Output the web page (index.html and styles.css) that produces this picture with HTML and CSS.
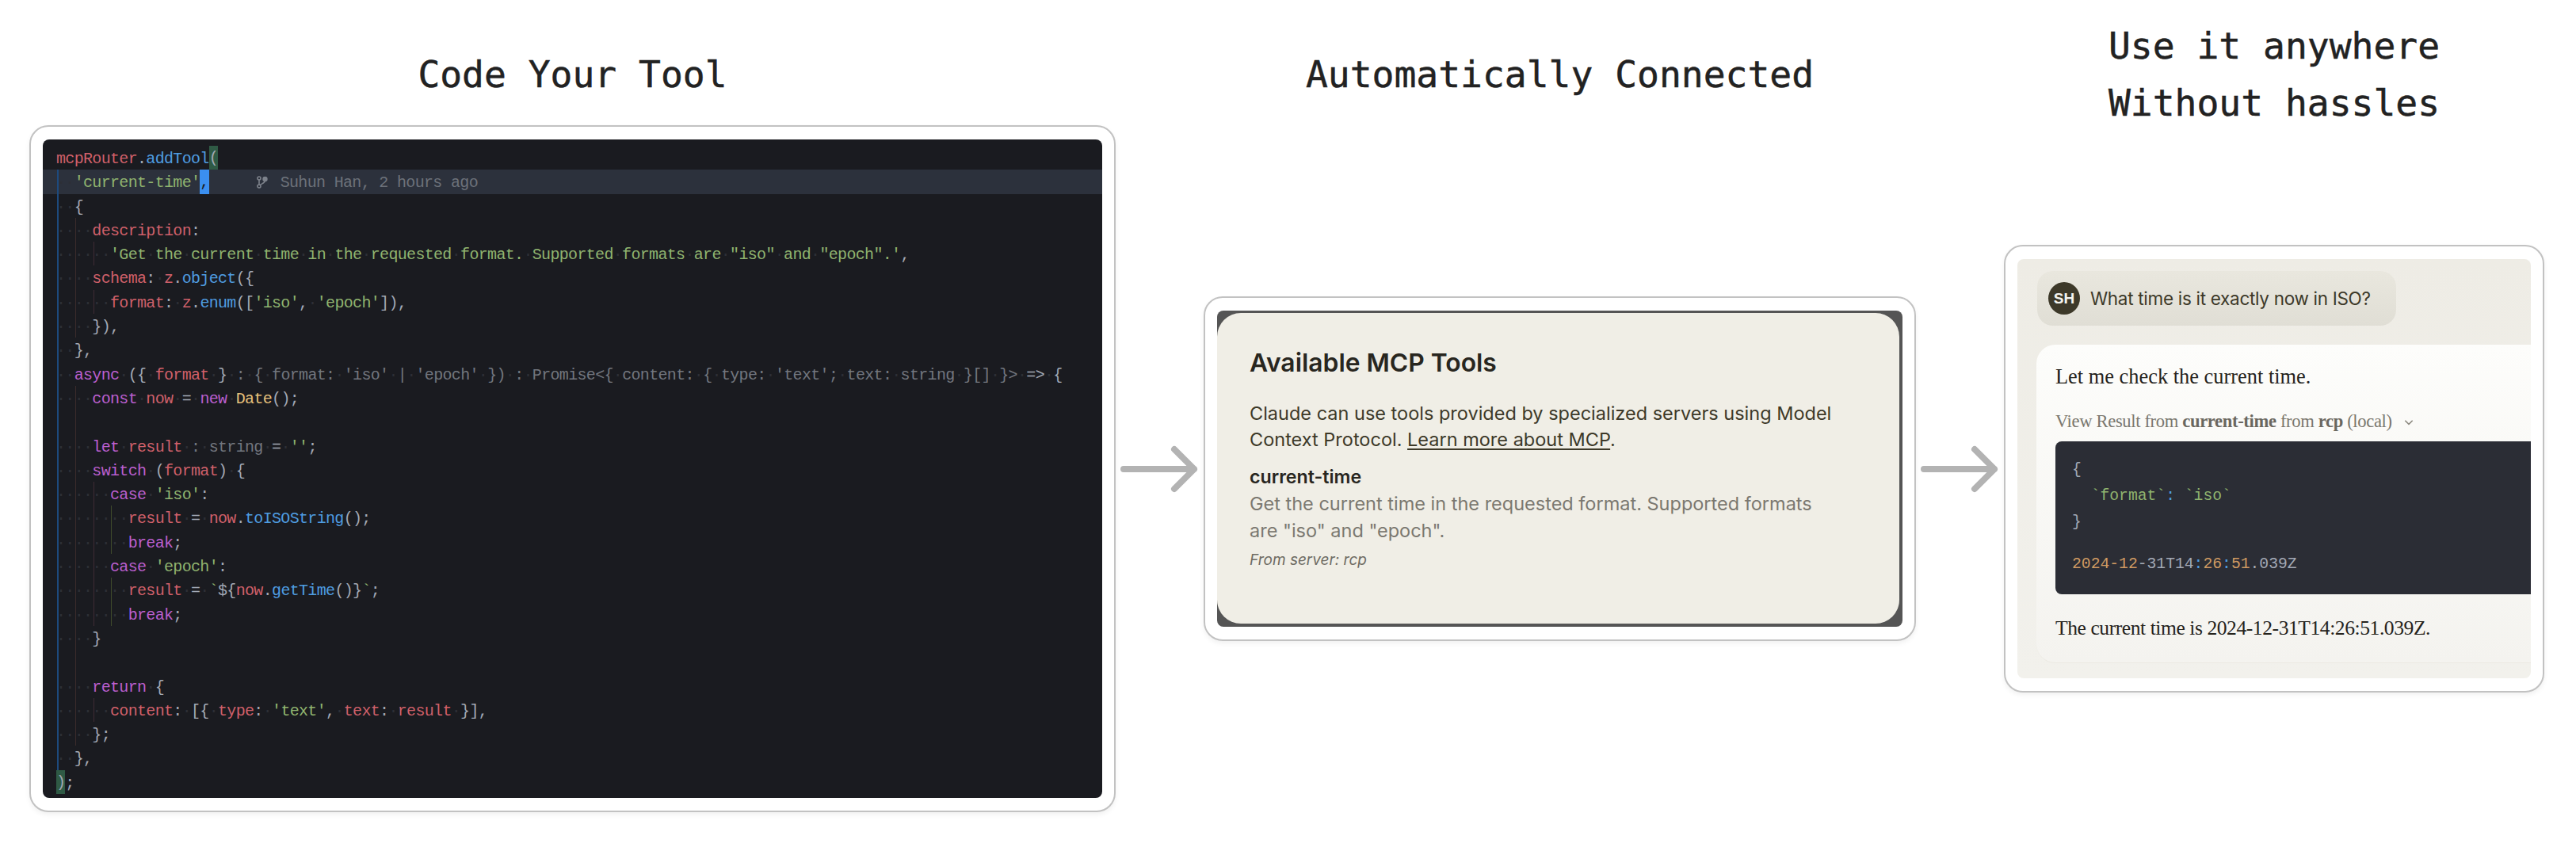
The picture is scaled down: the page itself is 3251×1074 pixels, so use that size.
FILE: index.html
```html
<!DOCTYPE html>
<html lang="en">
<head>
<meta charset="utf-8">
<title>MCP Router</title>
<link rel="stylesheet" href="styles.css">
</head>
<body>
<main class="flow">
  <h2 class="heading">Code Your Tool</h2>
  <div></div>
  <h2 class="heading">Automatically Connected</h2>
  <div></div>
  <h2 class="heading">Use it anywhere<br>Without hassles</h2>

  <section class="card card-code">
    <div class="code">
      <div class="line"><span class="r">mcpRouter</span><span class="n">.</span><span class="b">addTool</span><span class="match">(</span></div>
      <div class="line current gb"><i class="w">··</i><span class="g">'current-time'</span><span class="cursor">,</span><span class="blame"><svg class="blame-icon" viewBox="0 0 16 16" aria-hidden="true"><circle cx="4.5" cy="3" r="2"/><circle cx="4.5" cy="13" r="2"/><circle cx="12" cy="4" r="2.4" class="fill"/><path d="M4.5 5v6M12 6c0 3-4 3.500-7 6"/></svg><span>Suhun Han, 2 hours ago</span></span></div>
      <div class="line gb"><i class="w">··</i><span class="n">{</span></div>
      <div class="line gb g2"><i class="w">····</i><span class="r">description</span><span class="n">:</span></div>
      <div class="line gb g2 g4"><i class="w">······</i><span class="g">'Get<i class="w">·</i>the<i class="w">·</i>current<i class="w">·</i>time<i class="w">·</i>in<i class="w">·</i>the<i class="w">·</i>requested<i class="w">·</i>format.<i class="w">·</i>Supported<i class="w">·</i>formats<i class="w">·</i>are<i class="w">·</i>"iso"<i class="w">·</i>and<i class="w">·</i>"epoch".'</span><span class="n">,</span></div>
      <div class="line gb g2"><i class="w">····</i><span class="r">schema</span><span class="n">:</span><i class="w">·</i><span class="r">z</span><span class="n">.</span><span class="b">object</span><span class="n">({</span></div>
      <div class="line gb g2 g4"><i class="w">······</i><span class="r">format</span><span class="n">:</span><i class="w">·</i><span class="r">z</span><span class="n">.</span><span class="b">enum</span><span class="n">([</span><span class="g">'iso'</span><span class="n">,</span><i class="w">·</i><span class="g">'epoch'</span><span class="n">]),</span></div>
      <div class="line gb g2"><i class="w">····</i><span class="n">}),</span></div>
      <div class="line gb"><i class="w">··</i><span class="n">},</span></div>
      <div class="line gb"><i class="w">··</i><span class="p">async</span><i class="w">·</i><span class="n">({</span><i class="w">·</i><span class="r">format</span><i class="w">·</i><span class="n">}</span><i class="w">·</i><span class="d">:<i class="w">·</i>{<i class="w">·</i>format:<i class="w">·</i>'iso'<i class="w">·</i>|<i class="w">·</i>'epoch'<i class="w">·</i>})<i class="w">·</i>:<i class="w">·</i>Promise&lt;{<i class="w">·</i>content:<i class="w">·</i>{<i class="w">·</i>type:<i class="w">·</i>'text';<i class="w">·</i>text:<i class="w">·</i>string<i class="w">·</i>}[]<i class="w">·</i>}&gt;</span><i class="w">·</i><span class="n">=&gt;</span><i class="w">·</i><span class="n">{</span></div>
      <div class="line gb g2"><i class="w">····</i><span class="p">const</span><i class="w">·</i><span class="r">now</span><i class="w">·</i><span class="n">=</span><i class="w">·</i><span class="p">new</span><i class="w">·</i><span class="y">Date</span><span class="n">();</span></div>
      <div class="line gb g2">&nbsp;</div>
      <div class="line gb g2"><i class="w">····</i><span class="p">let</span><i class="w">·</i><span class="r">result</span><i class="w">·</i><span class="d">:<i class="w">·</i>string</span><i class="w">·</i><span class="n">=</span><i class="w">·</i><span class="g">''</span><span class="n">;</span></div>
      <div class="line gb g2"><i class="w">····</i><span class="p">switch</span><i class="w">·</i><span class="n">(</span><span class="r">format</span><span class="n">)</span><i class="w">·</i><span class="n">{</span></div>
      <div class="line gb g2 g4"><i class="w">······</i><span class="p">case</span><i class="w">·</i><span class="g">'iso'</span><span class="n">:</span></div>
      <div class="line gb g2 g4 g6"><i class="w">········</i><span class="r">result</span><i class="w">·</i><span class="n">=</span><i class="w">·</i><span class="r">now</span><span class="n">.</span><span class="b">toISOString</span><span class="n">();</span></div>
      <div class="line gb g2 g4 g6"><i class="w">········</i><span class="p">break</span><span class="n">;</span></div>
      <div class="line gb g2 g4"><i class="w">······</i><span class="p">case</span><i class="w">·</i><span class="g">'epoch'</span><span class="n">:</span></div>
      <div class="line gb g2 g4 g6"><i class="w">········</i><span class="r">result</span><i class="w">·</i><span class="n">=</span><i class="w">·</i><span class="g">`</span><span class="n">${</span><span class="r">now</span><span class="n">.</span><span class="b">getTime</span><span class="n">()}</span><span class="g">`</span><span class="n">;</span></div>
      <div class="line gb g2 g4 g6"><i class="w">········</i><span class="p">break</span><span class="n">;</span></div>
      <div class="line gb g2"><i class="w">····</i><span class="n">}</span></div>
      <div class="line gb g2">&nbsp;</div>
      <div class="line gb g2"><i class="w">····</i><span class="p">return</span><i class="w">·</i><span class="n">{</span></div>
      <div class="line gb g2 g4"><i class="w">······</i><span class="r">content</span><span class="n">:</span><i class="w">·</i><span class="n">[{</span><i class="w">·</i><span class="r">type</span><span class="n">:</span><i class="w">·</i><span class="g">'text'</span><span class="n">,</span><i class="w">·</i><span class="r">text</span><span class="n">:</span><i class="w">·</i><span class="r">result</span><i class="w">·</i><span class="n">}],</span></div>
      <div class="line gb g2"><i class="w">····</i><span class="n">};</span></div>
      <div class="line gb"><i class="w">··</i><span class="n">},</span></div>
      <div class="line"><span class="match">)</span><span class="n">;</span></div>
    </div>
  </section>

  <svg class="arrow" viewBox="0 0 100 64" aria-hidden="true"><path d="M4 32H93M68 7l25 25-25 25"/></svg>

  <section class="card card-tools">
    <div class="tools-frame">
      <div class="tools">
        <h3 class="tools-title">Available MCP Tools</h3>
        <p class="tools-intro">Claude can use tools provided by specialized servers using Model Context Protocol. <a class="tools-link" href="#">Learn more about MCP</a>.</p>
        <p class="tool-name">current-time</p>
        <p class="tool-desc">Get the current time in the requested format. Supported formats are "iso" and "epoch".</p>
        <p class="tool-server">From server: rcp</p>
      </div>
    </div>
  </section>

  <svg class="arrow" viewBox="0 0 100 64" aria-hidden="true"><path d="M4 32H93M68 7l25 25-25 25"/></svg>

  <section class="card card-chat">
    <div class="chat">
      <div class="bubble">
        <span class="avatar">SH</span>
        <span class="bubble-text">What time is it exactly now in ISO?</span>
      </div>
      <div class="reply">
        <p class="reply-text">Let me check the current time.</p>
        <p class="result-toggle">View Result from <strong class="strong">current-time</strong> from <strong class="strong">rcp</strong> (local)<svg class="chevron" viewBox="0 0 12 12" aria-hidden="true"><path d="M2 4l4 4 4-4"/></svg></p>
        <div class="result">
          <div class="result-json">
            <div class="n">{</div>
            <div><span class="g">&nbsp;&nbsp;`format`</span><span class="b">:</span><span class="g"> `iso`</span></div>
            <div class="n">}</div>
          </div>
          <div class="result-time"><span class="o">2024-12</span><span class="n">-31T14</span><span class="b">:</span><span class="o">26</span><span class="b">:</span><span class="o">51</span><span class="n">.039Z</span></div>
        </div>
        <p class="reply-final">The current time is 2024-12-31T14:26:51.039Z.</p>
      </div>
    </div>
  </section>
</main>
</body>
</html>
```
FILE: styles.css
```css
* { box-sizing: border-box; }
html, body { margin: 0; padding: 0; background: #fff; }
body { width: 3251px; height: 1074px; overflow: hidden; }

.flow {
  display: grid;
  grid-template-columns: 1371px 111px 899px 111px 682px;
  grid-template-rows: 158px 867px;
  padding-left: 37px;
  align-items: center;
  justify-items: center;
}

.heading {
  align-self: start;
  margin: 22px 0 -8px;
  height: 144px;
  display: flex;
  align-items: center;
  text-align: center;
  font: 400 46.3px/72px "DejaVu Sans Mono", monospace;
  -webkit-text-stroke: 0.5px #222;
  color: #222;
}

.card {
  background: #fff;
  border: 2px solid #c2c2c2;
  border-radius: 24px;
  box-shadow: 0 3px 6px rgba(0,0,0,.06);
}
.card-code { width: 1371px; height: 867px; padding: 16px 15px; }
.card-tools { width: 899px; height: 435px; padding: 16px 15px; }
.card-chat { width: 682px; height: 565px; padding: 16px 15px; }

/* code editor */
.code {
  height: 100%;
  background: #1a1b20;
  border-radius: 8px;
  padding-top: 8px;
  overflow: hidden;
  font: 400 20px/33.5px "Liberation Mono", monospace;
  letter-spacing: -.67px;
  color: #abb2bf;
}
.line {
  --gb: linear-gradient(transparent, transparent);
  --g2: linear-gradient(transparent, transparent);
  --g4: linear-gradient(transparent, transparent);
  --g6: linear-gradient(transparent, transparent);
  height: 30.3px;
  padding-left: 17px;
  white-space: pre;
  background-image: var(--gb), var(--g2), var(--g4), var(--g6);
  background-repeat: no-repeat;
  background-size: 2px 100%, 1px 100%, 1px 100%, 1px 100%;
  background-position: 18px 0, 41px 0, 64px 0, 86px 0;
}
.gb { --gb: linear-gradient(#1d4a7e, #1d4a7e); }
.g2 { --g2: linear-gradient(#3b2b2b, #3b2b2b); }
.g4 { --g4: linear-gradient(#3e2a33, #3e2a33); }
.g6 { --g6: linear-gradient(#3f4a2c, #3f4a2c); }
.current { background-color: #2c313c; }

.w { font-style: normal; color: #2d2f36; }
.r { color: #d0606a; }
.g { color: #90b46f; }
.b { color: #4f9de0; }
.p { color: #bb5fcf; }
.y { color: #e5c07b; }
.n { color: #a3a9b5; }
.d { color: #72767e; }
.o { color: #cf9a62; }

.match { display: inline-block; height: 30.3px; line-height: 31.5px; background: #2f5a45; color: #a3a9b5; vertical-align: top; }
.cursor { display: inline-block; height: 30.3px; line-height: 31.5px; background: #3b8ff0; color: #1a1b20; vertical-align: top; }
.blame { margin-left: 58px; color: #6c717a; }
.blame-icon {
  width: 17px; height: 16px;
  margin-right: 15px;
  vertical-align: -2px;
  fill: none;
  stroke: #7d828b;
  stroke-width: 1.6;
}
.blame-icon .fill { fill: #7d828b; }

/* arrows */
.arrow {
  width: 100px;
  height: 64px;
  fill: none;
  stroke: #b3b3b3;
  stroke-width: 8;
  stroke-linecap: round;
  stroke-linejoin: round;
}

/* tools dialog */
.tools-frame {
  height: 100%;
  background: #555;
  border-radius: 8px;
  padding: 3px 4px 4px 0;
}
.tools {
  height: 100%;
  background: #f0eee6;
  border-radius: 30px;
  padding: 43px 78px 0 41px;
  color: #3d3929;
  font-family: Inter, "Liberation Sans", sans-serif;
}
.tools-title { margin: 0 0 27px; font: 600 31.8px/40px Inter, sans-serif; color: #28261f; }
.tools-intro { margin: 0 0 15px; font-size: 23.5px; line-height: 33px; }
.tools-link { color: inherit; text-decoration: underline; text-underline-offset: 3px; }
.tool-name { margin: 0; font-size: 23.2px; line-height: 33px; font-weight: 600; color: #28261f; }
.tool-desc { margin: 0 0 7px; font-size: 23.5px; line-height: 33.5px; color: #7b7870; }
.tool-server { margin: 0; font-size: 19px; line-height: 28px; font-style: italic; color: #6e6b63; }

/* chat */
.chat {
  height: 100%;
  overflow: hidden;
  border-radius: 8px;
  background: linear-gradient(#eeece5, #f2f1ec);
  padding: 15px 0 0 25px;
}
.bubble {
  width: 453px;
  height: 69px;
  display: flex;
  align-items: center;
  gap: 13px;
  padding: 0 14px;
  border-radius: 20px;
  background: linear-gradient(#e9e7de, #e0ded5);
}
.avatar {
  flex: none;
  width: 40px;
  height: 41px;
  border-radius: 50%;
  background: #3d3929;
  color: #f5f4ef;
  display: flex;
  align-items: center;
  justify-content: center;
  font: 700 19px "Liberation Sans", sans-serif;
}
.bubble-text { font: 400 22.5px/30px Inter, sans-serif; color: #3d3929; letter-spacing: -.3px; white-space: nowrap; }
.reply {
  margin: 24px -60px 0 -1px;
  height: 402px;
  padding: 23px 20px 0 24px;
  border-radius: 24px 0 0 24px;
  background: linear-gradient(#fdfdfb, #f4f3ef);
  border-bottom: 1px solid #ebe9e2;
}
.reply-text { margin: 0; font: 400 26.4px/34px "Liberation Serif", serif; color: #25231c; }
.result-toggle { margin: 25px 0 10px; font: 400 22.6px/30px "Liberation Serif", serif; letter-spacing: -.35px; color: #7a776e; white-space: nowrap; }
.strong { font-weight: 700; color: #6a675f; }
.chevron { width: 14px; height: 14px; margin-left: 14px; vertical-align: -1px; fill: none; stroke: #8a877e; stroke-width: 1.3; }
.result {
  height: 193px;
  padding: 20px 21px 0;
  background: #2b2d35;
  border-radius: 8px;
  font: 400 19.7px/33px "Liberation Mono", monospace;
}
.result-time { margin-top: 20px; }
.reply-final { margin: 26px 0 0; font: 400 25.6px/34px "Liberation Serif", serif; letter-spacing: -.45px; color: #25231c; white-space: nowrap; }
```
